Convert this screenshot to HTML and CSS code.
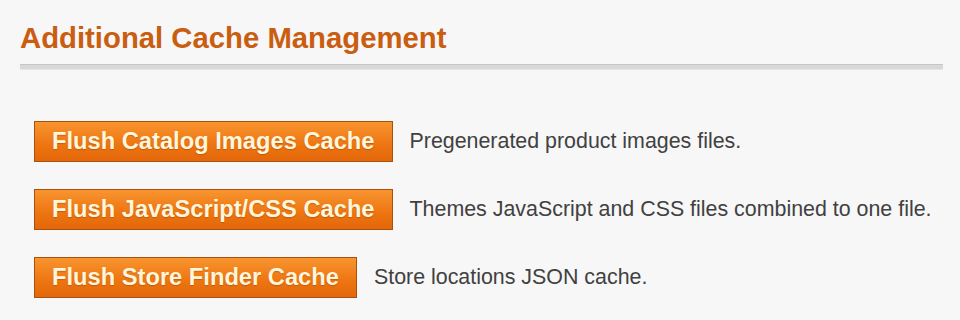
FILE: index.html
```html
<!DOCTYPE html>
<html lang="en">
<head>
  <meta charset="UTF-8" />
  <title>Additional Cache Management</title>
  <link rel="stylesheet" href="styles.css">
</head>
<body>

  <div class="section">
    <h2 class="section-title">Additional Cache Management</h2>
    <div class="section-rule"></div>

    <div class="cache-list">
      <div class="cache-row">
        <button class="flush-btn">Flush Catalog Images Cache</button>
        <span class="cache-note">Pregenerated product images files.</span>
      </div>
      <div class="cache-row">
        <button class="flush-btn">Flush JavaScript/CSS Cache</button>
        <span class="cache-note">Themes JavaScript and CSS files combined to one file.</span>
      </div>
      <div class="cache-row">
        <button class="flush-btn">Flush Store Finder Cache</button>
        <span class="cache-note">Store locations JSON cache.</span>
      </div>
    </div>
  </div>

</body>
</html>
```

FILE: styles.css
```css
body {
  font-family: "Liberation Sans", Arial, sans-serif;
  margin: 0;
  background: #f7f7f7;
}

.section {
  padding: 21px 17px 0 20px;
}

.section-title {
  margin: 0;
  font-size: 29.3px;
  font-weight: bold;
  color: #c95d10;
}

.section-rule {
  margin-top: 9px;
  height: 4px;
  background: #d8d8d8;
  border-top: 1px solid #c6c6c6;
  border-bottom: 1px solid #e6e6e6;
}

.cache-list {
  margin-top: 51px;
  padding-left: 14px;
  display: flex;
  flex-direction: column;
  gap: 27px;
}

.cache-row {
  display: flex;
  align-items: center;
  gap: 17px;
}

.flush-btn {
  height: 41px;
  padding: 0 17px;
  font-family: "Liberation Sans", Arial, sans-serif;
  font-size: 23.7px;
  font-weight: bold;
  color: #fff6dc;
  text-shadow: 0 1px 1px rgba(120, 50, 0, 0.35);
  background: linear-gradient(#f8952f, #ed7411 60%, #e4670a);
  border: 1px solid #a9500f;
  border-radius: 0;
  cursor: pointer;
}

.cache-note {
  font-size: 21.4px;
  color: #414141;
}
```
